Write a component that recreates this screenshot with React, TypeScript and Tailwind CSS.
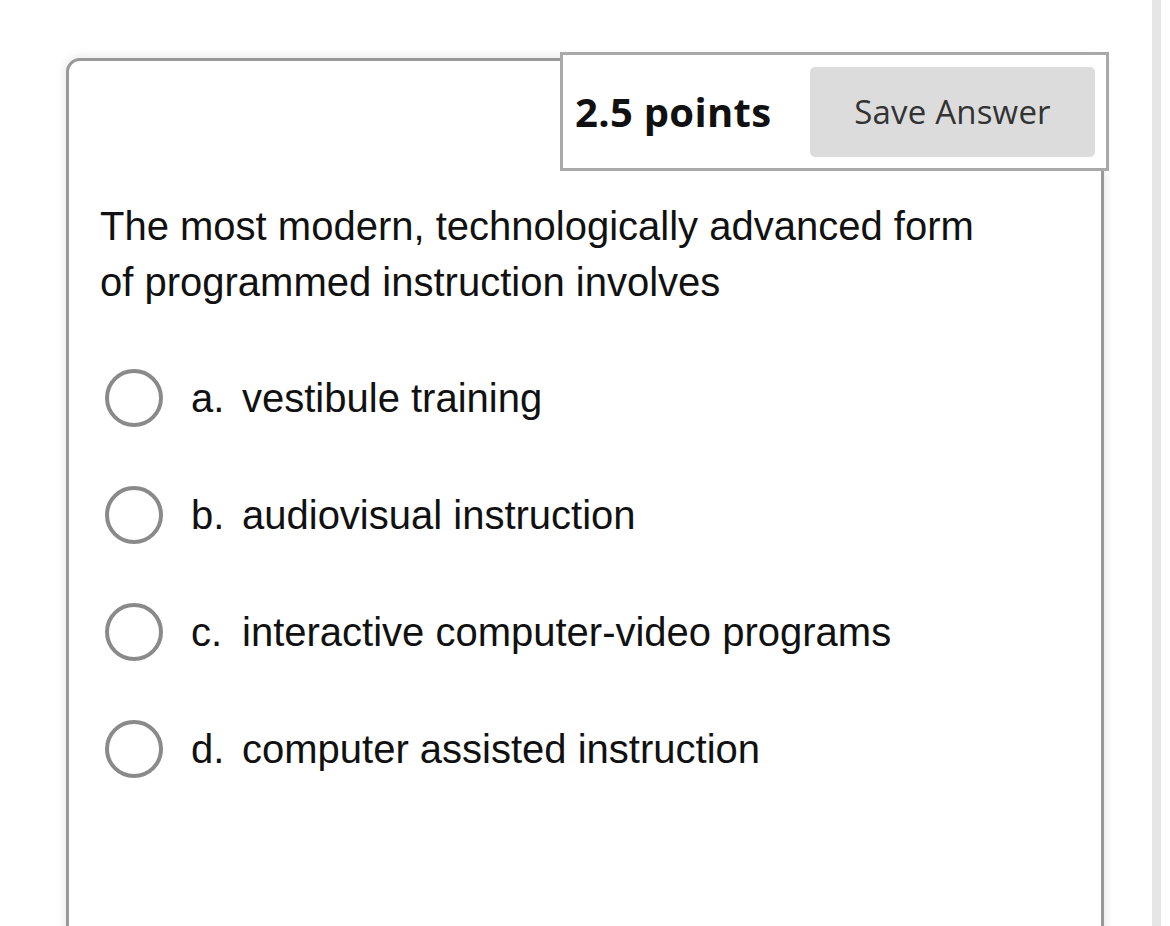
import type { FC } from "react";

const OPTIONS = [
  { letter: "a.", text: "vestibule training" },
  { letter: "b.", text: "audiovisual instruction" },
  { letter: "c.", text: "interactive computer-video programs" },
  { letter: "d.", text: "computer assisted instruction" },
];

const Radio: FC = () => (
  <span className="w-[58px] h-[58px] rounded-full border-[4px] border-[#8a8a8a] bg-white shrink-0" />
);

const App: FC = () => {
  return (
    <div className="w-[1170px] h-[926px] overflow-hidden bg-white flex">
      <div className="pl-[66px] pt-[58px] w-[1152px]">
        <div className="w-[1038px] h-[900px] border-[3px] border-[#999999] rounded-tl-[14px] rounded-tr-[4px] bg-white shadow-[0_0_12px_rgba(0,0,0,0.12)]">
          <div className="flex justify-end -mt-[9px] -mr-[8px]">
            <div className="w-[549px] h-[119px] border-[3px] border-[#a9a9a9] bg-white flex items-center justify-between pl-[12px] pr-[11px]">
              <span className="font-['Open_Sans',sans-serif] font-bold text-[40px] text-[#111] tracking-[0.3px]">
                2.5 points
              </span>
              <button className="w-[285px] h-[90px] rounded-[5px] bg-[#dcdcdc] font-['Open_Sans',sans-serif] text-[33px] text-[#333] tracking-[0.2px]">
                Save Answer
              </button>
            </div>
          </div>

          <div className="pl-[31px] pt-[27px] font-['Liberation_Sans',Arial,sans-serif] text-[#111]">
            <p className="text-[40px] leading-[56px] w-[960px]">
              The most modern, technologically advanced form
              <br />
              of programmed instruction involves
            </p>

            <div className="mt-[59px] flex flex-col gap-[59px] pl-[5px]">
              {OPTIONS.map((o) => (
                <label key={o.letter} className="flex items-center h-[58px]">
                  <Radio />
                  <span className="ml-[28px] w-[51px] text-[40px]">{o.letter}</span>
                  <span className="text-[40px]">{o.text}</span>
                </label>
              ))}
            </div>
          </div>
        </div>
      </div>
      <div className="w-[9px] h-full bg-[#e6e6e6]" />
    </div>
  );
};

export default App;
